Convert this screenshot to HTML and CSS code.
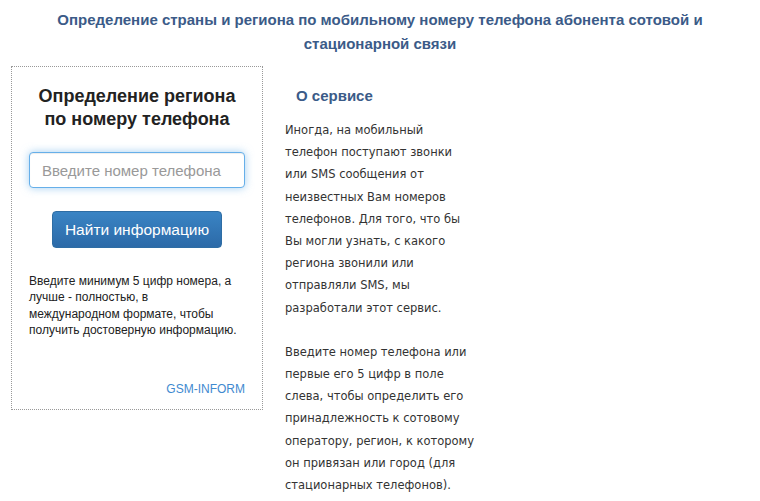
FILE: index.html
```html
<!DOCTYPE html>
<html lang="ru">
<head>
<meta charset="utf-8">
<title>Определение региона</title>
<link rel="stylesheet" href="styles.css">
</head>
<body>
<h1 class="page-title">Определение страны и региона по мобильному номеру телефона абонента сотовой и стационарной связи</h1>
<div class="layout">
  <div class="box">
    <h2 class="box-title">Определение региона<br>по номеру телефона</h2>
    <input class="phone" type="text" placeholder="Введите номер телефона">
    <div class="btn-row"><button class="btn">Найти информацию</button></div>
    <p class="hint">Введите минимум 5 цифр номера, а<br>лучше - полностью, в<br>международном формате, чтобы<br>получить достоверную информацию.</p>
    <div class="brand">GSM-INFORM</div>
  </div>
  <div class="about">
    <h3 class="about-title">О сервисе</h3>
    <p class="about-text">Иногда, на мобильный телефон поступают звонки или SMS сообщения от неизвестных Вам номеров телефонов. Для того, что бы Вы могли узнать, с какого региона звонили или отправляли SMS, мы разработали этот сервис.</p>
    <p class="about-text">Введите номер телефона или первые его 5 цифр в поле слева, чтобы определить его принадлежность к сотовому оператору, регион, к которому он привязан или город (для стационарных телефонов).</p>
  </div>
</div>
</body>
</html>
```
FILE: styles.css
```css
html, body { margin: 0; padding: 0; background: #fff; }
body { font-family: "Liberation Sans", Arial, sans-serif; color: #333; }
.page-title {
  margin: 8px 40px 10px;
  font-size: 15px;
  line-height: 24px;
  font-weight: bold;
  text-align: center;
  color: #3b5b88;
}
.layout { display: flex; align-items: flex-start; padding-left: 11px; }
.box {
  width: 216px;
  border: 1px dotted #999;
  padding: 18px 17px 12px;
}
.box-title {
  margin: 0;
  font-size: 18px;
  line-height: 23px;
  font-weight: bold;
  text-align: center;
  color: #222;
}
.phone {
  display: block;
  box-sizing: border-box;
  width: 216px;
  height: 36px;
  margin-top: 21px;
  padding: 0 12px;
  border: 1px solid #66afe9;
  border-radius: 4px;
  box-shadow: inset 0 1px 1px rgba(0,0,0,.075), 0 0 8px rgba(102,175,233,.6);
  font-family: "Liberation Sans", Arial, sans-serif;
  font-size: 15px;
  color: #555;
  outline: none;
}
.phone::placeholder { color: #999; }
.btn-row { display: flex; justify-content: center; margin-top: 23px; }
.btn {
  width: 170px;
  height: 37px;
  border: 1px solid #2e6da4;
  border-radius: 4px;
  background: linear-gradient(#3a84c4, #2c6aa8);
  color: #fff;
  font-family: "Liberation Sans", Arial, sans-serif;
  font-size: 15.5px;
  padding: 0;
}
.hint {
  margin: 25px 0 0;
  font-size: 12px;
  line-height: 16.4px;
  color: #222;
}
.brand {
  margin-top: 42px;
  text-align: right;
  font-size: 12px;
  line-height: 16px;
  color: #3f8ad0;
}
.about { width: 192px; margin-left: 22px; }
.about-title {
  margin: 20px 0 0 11px;
  font-size: 15px;
  line-height: 20px;
  font-weight: bold;
  color: #3b5b88;
}
.about-text {
  margin: 13px 0 22px;
  font-family: "DejaVu Sans", Verdana, sans-serif;
  font-size: 11.5px;
  line-height: 22.2px;
  color: #333;
}
```
